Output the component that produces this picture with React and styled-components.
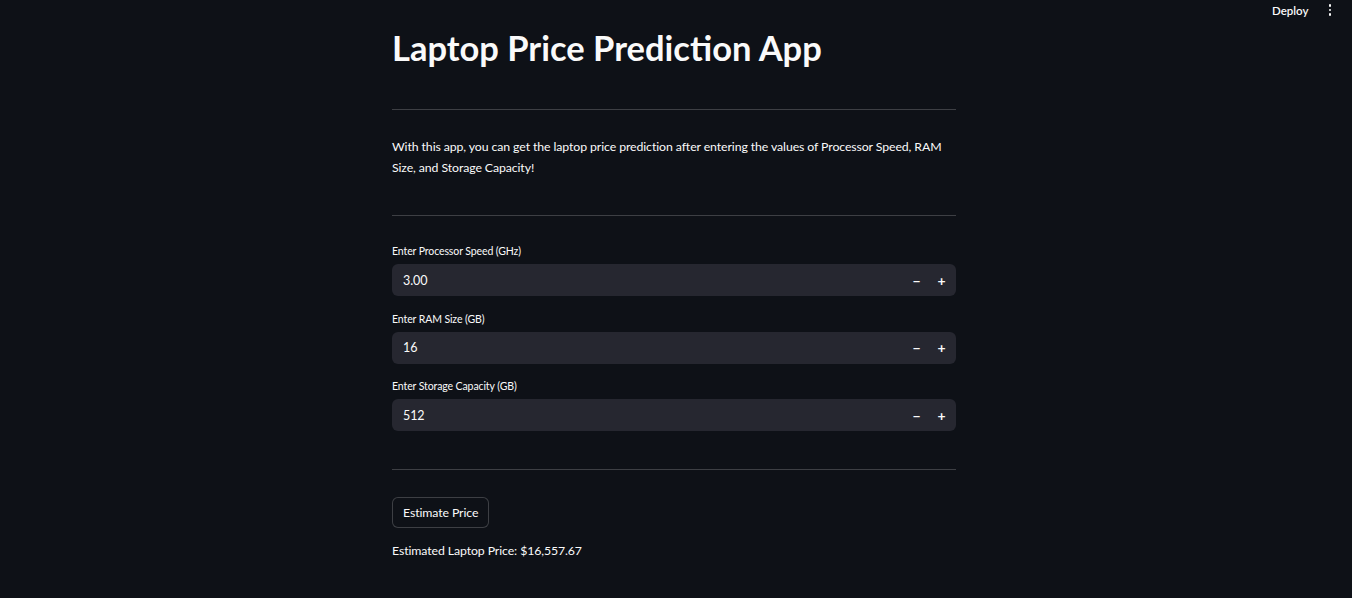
import { createGlobalStyle } from "styled-components";
import styled from "styled-components";

const Global = createGlobalStyle`
  html, body {
    margin: 0;
    padding: 0;
    background: #0e1117;
    color: #fafafa;
    font-family: "Lato", "Noto Sans", sans-serif;
  }
`;

const Header = styled.div`
  height: 20px;
  display: flex;
  justify-content: flex-end;
  align-items: center;
  gap: 20px;
  padding-right: 21px;
`;

const Deploy = styled.span`
  font-size: 11.5px;
  font-weight: 600;
  color: #fafafa;
`;

const Kebab = styled.span`
  display: flex;
  flex-direction: column;
  gap: 2px;
  & > i {
    width: 2.5px;
    height: 2.5px;
    border-radius: 50%;
    background: #fafafa;
  }
`;

const Main = styled.main`
  width: 564px;
  margin: 0 auto;
  position: relative;
  left: -2px;
  font-size: 12.3px;
  letter-spacing: -0.1px;
`;

const Title = styled.h1`
  margin: 0;
  padding: 7px 0 0;
  font-size: 34.5px;
  font-weight: 700;
  line-height: 42px;
  letter-spacing: 0;
`;

const Rule = styled.hr`
  border: none;
  border-top: 1px solid rgba(250, 250, 250, 0.2);
  margin: ${(p) => p.$m || "0"};
`;

const Text = styled.p`
  margin: 0;
  line-height: 21px;
`;

const Field = styled.div`
  display: flex;
  flex-direction: column;
  gap: 5px;
  margin-bottom: 14.5px;
`;

const Label = styled.label`
  font-size: 10.5px;
  line-height: 16px;
`;

const InputBox = styled.div`
  height: 32px;
  background: #262730;
  border-radius: 6px;
  display: flex;
  align-items: center;
  padding-left: 11px;
  padding-right: 2px;
  font-size: 12.5px;
`;

const Value = styled.span`
  flex: 1;
`;

const Step = styled.span`
  width: 25px;
  display: flex;
  justify-content: center;
  font-size: 14px;
  font-weight: 700;
`;

const Button = styled.button`
  display: block;
  height: 31px;
  padding: 0 10px;
  background: #0e1117;
  border: 1px solid rgba(250, 250, 250, 0.2);
  border-radius: 6px;
  color: #fafafa;
  font-family: inherit;
  font-size: 12.3px;
  letter-spacing: -0.1px;
`;

const Result = styled.p`
  margin: 12px 0 0;
  line-height: 21px;
`;

const fields = [
  ["Enter Processor Speed (GHz)", "3.00"],
  ["Enter RAM Size (GB)", "16"],
  ["Enter Storage Capacity (GB)", "512"],
];

export default function App() {
  return (
    <>
      <Global />
      <Header>
        <Deploy>Deploy</Deploy>
        <Kebab>
          <i />
          <i />
          <i />
        </Kebab>
      </Header>
      <Main>
        <Title>Laptop Price Prediction App</Title>
        <Rule $m="40px 0 26px" />
        <Text>
          With this app, you can get the laptop price prediction after entering the values of Processor Speed, RAM
          Size, and Storage Capacity!
        </Text>
        <Rule $m="37px 0 27px" />
        {fields.map(([label, value]) => (
          <Field key={label}>
            <Label>{label}</Label>
            <InputBox>
              <Value>{value}</Value>
              <Step>−</Step>
              <Step>+</Step>
            </InputBox>
          </Field>
        ))}
        <Rule $m="38px 0 27px" />
        <Button>Estimate Price</Button>
        <Result>Estimated Laptop Price: $16,557.67</Result>
      </Main>
    </>
  );
}
